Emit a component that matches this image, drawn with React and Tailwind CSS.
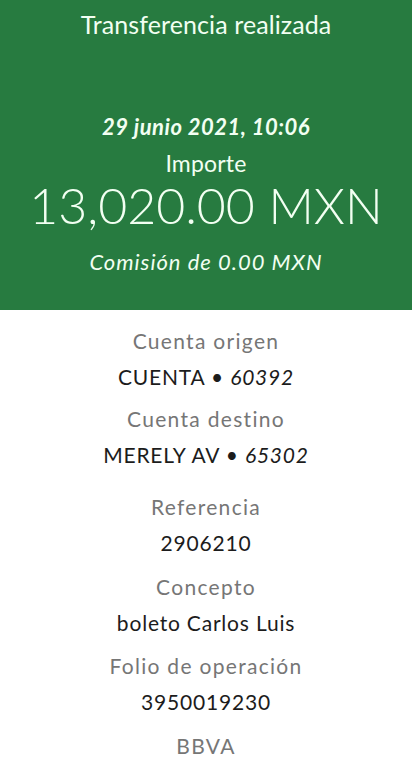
export default function App() {
  const rows = [
    { label: "Cuenta origen", value: <>CUENTA • <span className="italic">60392</span></>, mt: "mt-0" },
    { label: "Cuenta destino", value: <>MERELY AV • <span className="italic">65302</span></>, mt: "mt-[6px]" },
    { label: "Referencia", value: "2906210", mt: "mt-[16px]" },
    { label: "Concepto", value: "boleto Carlos Luis", mt: "mt-[8px]" },
    { label: "Folio de operación", value: "3950019230", mt: "mt-[7px]" },
  ];
  return (
    <div className="w-[412px] h-[770px] bg-white overflow-hidden text-center" style={{ fontFamily: "Lato, 'Open Sans', sans-serif" }}>
      <div className="bg-[#277b40] text-[#f2fff2] pb-[32px]">
        <div className="h-[48px] leading-[48px] text-[25px] tracking-[0.1px]">Transferencia realizada</div>
        <div className="mt-[61px] h-[36px] leading-[36px] text-[22px] font-bold italic tracking-[0.5px]">29 junio 2021, 10:06</div>
        <div className="h-[36px] leading-[36px] text-[23px] tracking-[0.2px]">Importe</div>
        <div className="h-[48px] leading-[48px] text-[50px] font-light">13,020.00 MXN</div>
        <div className="mt-[17px] h-[32px] leading-[32px] text-[22px] italic tracking-[1px]">Comisión de 0.00 MXN</div>
      </div>
      <div className="pt-[13px]">
        {rows.map((r) => (
          <div key={r.label} className={r.mt}>
            <div className="h-[36px] leading-[36px] text-[21px] tracking-[1.3px] text-[#767676]">{r.label}</div>
            <div className="h-[36px] leading-[36px] text-[21px] tracking-[0.8px] text-[#1c1c1c]">{r.value}</div>
          </div>
        ))}
        <div className="mt-[8px] h-[36px] leading-[36px] text-[21px] tracking-[1.3px] text-[#767676]">BBVA</div>
      </div>
    </div>
  );
}
